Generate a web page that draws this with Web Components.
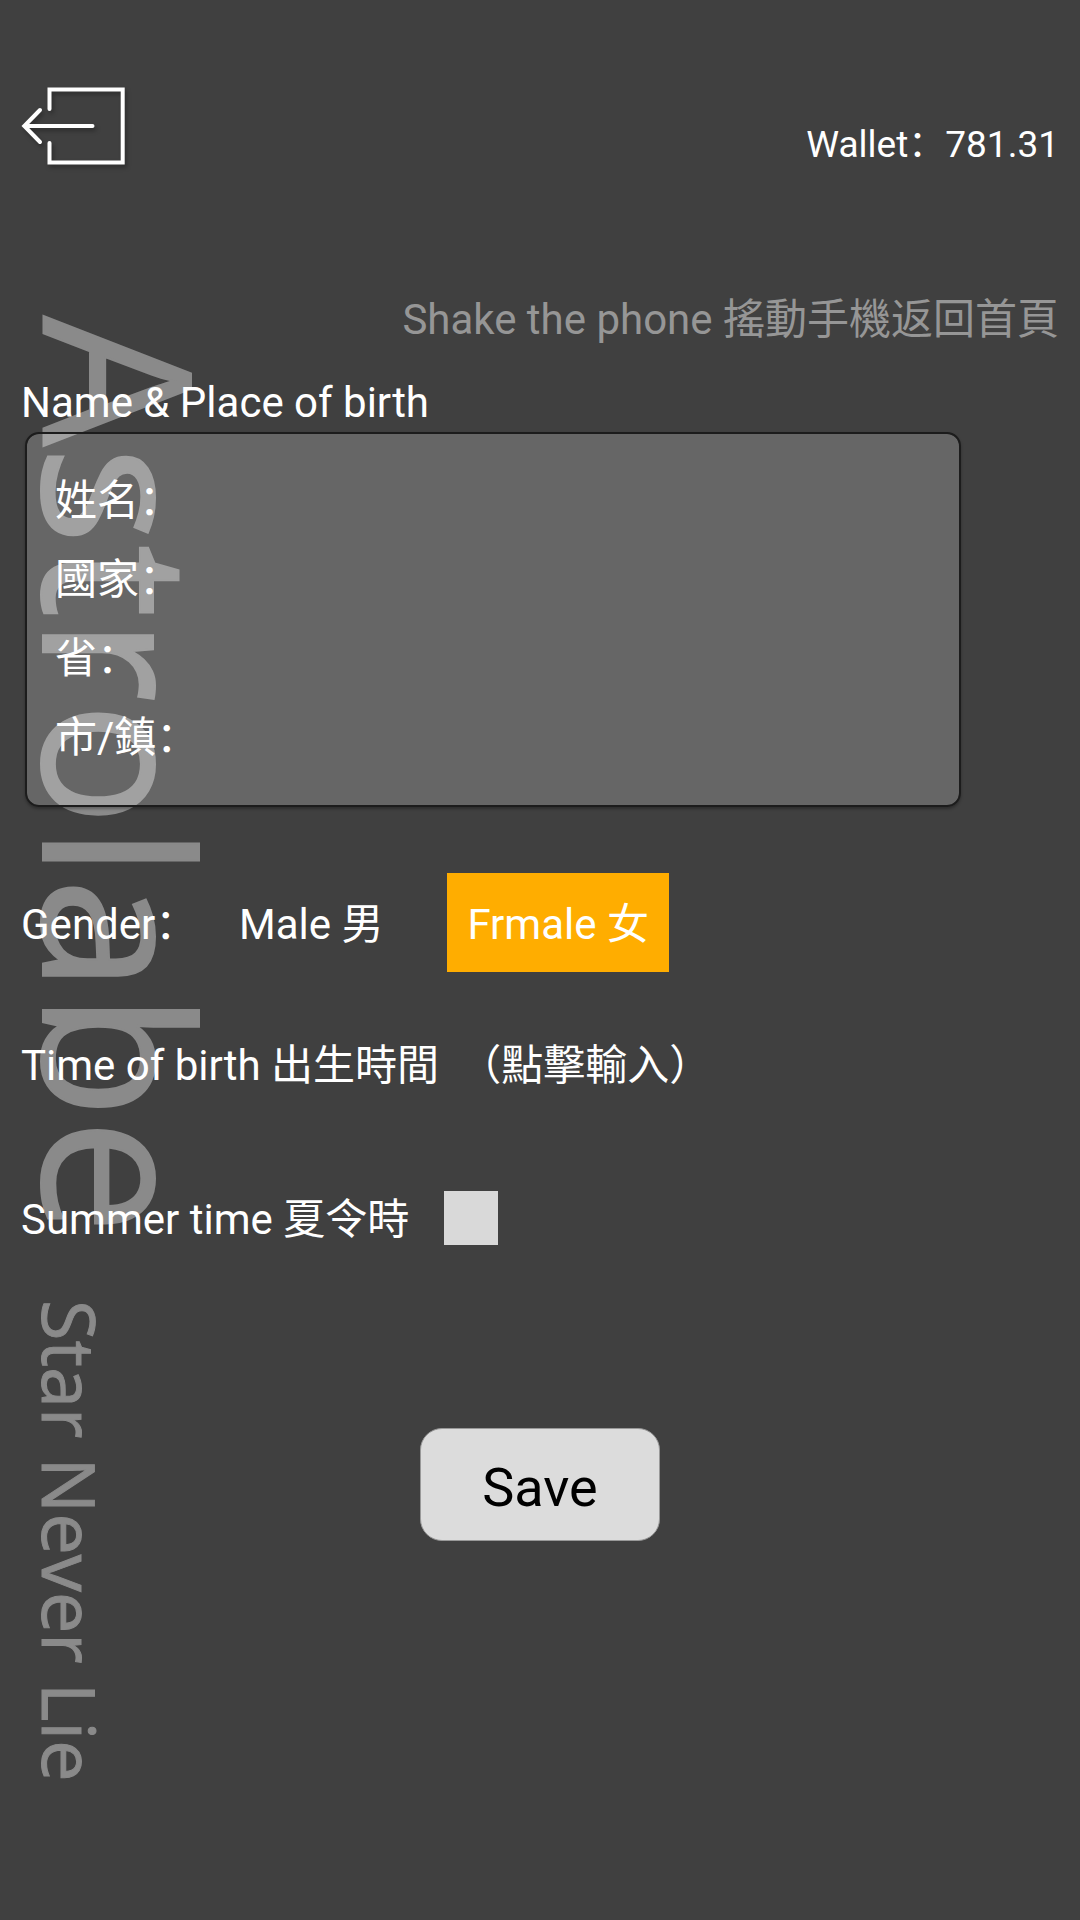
<!DOCTYPE html>
<html lang="en">
<head>
<meta charset="utf-8">
<meta name="viewport" content="width=device-width, initial-scale=1">
<title>Astrolabe</title>
<style>
  body {
    margin: 0;
    min-height: 100vh;
    background: #404040;
    color: #fff;
    font: 42px/50px Roboto, "Noto Sans CJK SC", sans-serif;
  }
</style>
</head>
<body>
<astro-page>
  <astro-watermark slot="backdrop">
    Astrolabe
    <span slot="tagline">Star Never Lie</span>
  </astro-watermark>
  <astro-header slot="header">Wallet：781.31</astro-header>
  <astro-hint>Shake the phone 搖動手機返回首頁</astro-hint>
  <birth-place heading="Name &amp; Place of birth">
    <text-field name="name">姓名：</text-field>
    <text-field name="country">國家：</text-field>
    <text-field name="province">省：</text-field>
    <text-field name="city">市/鎮：</text-field>
  </birth-place>
  <gender-picker label="Gender：" male="Male 男" female="Frmale 女"></gender-picker>
  <birth-time label="Time of birth 出生時間">（點擊輸入）</birth-time>
  <summer-time>Summer time 夏令時</summer-time>
  <save-button>Save</save-button>
</astro-page>

<script>
  const define = (name, render) => customElements.define(name, class extends HTMLElement {
    constructor() {
      super();
      this.attachShadow({ mode: 'open' });
    }
    connectedCallback() {
      this.shadowRoot.innerHTML = render(this);
    }
  });

  define('astro-page', () => `
    <style>
      :host { display: block; position: relative; min-height: 100vh; }
      main { position: relative; display: flex; flex-direction: column; padding: 84px 21px 0; }
    </style>
    <slot name="backdrop"></slot>
    <main><slot name="header"></slot><slot></slot></main>`);

  // Decorative vertical title lying behind the form
  define('astro-watermark', () => `
    <style>
      :host {
        position: absolute; top: 316px; left: 0;
        display: flex; flex-direction: column; align-items: flex-start; gap: 66px;
        color: #8a8a8a; font-family: "Open Sans", sans-serif; white-space: nowrap;
      }
      div { writing-mode: vertical-rl; }
      .title { font-size: 206px; line-height: 246px; -webkit-text-stroke: 2px #8a8a8a; }
      .tagline { font-size: 74px; line-height: 140px; -webkit-text-stroke: 1px #8a8a8a; }
    </style>
    <div class="title"><slot></slot></div>
    <div class="tagline"><slot name="tagline"></slot></div>`);

  define('astro-header', () => `
    <style>
      :host { display: flex; justify-content: space-between; align-items: flex-end; font-size: 37px; line-height: 46px; }
      button { border: 0; padding: 0; background: none; display: block; }
      svg { display: block; width: 108px; height: 84px; filter: drop-shadow(2px 3px 2px rgba(0,0,0,.3)); }
    </style>
    <button type="button" aria-label="Back">
      <svg viewBox="21 84 108 84" fill="none" stroke="#fff" stroke-width="4" stroke-linecap="round">
        <path d="M49.5 109V89.5H122.7V162.5H49.5V143M92.5 126H25M40 110L24.3 126L40 142"/>
      </svg>
    </button>
    <span><slot></slot></span>`);

  define('astro-hint', () => `
    <style>:host { display: block; margin-top: 127px; text-align: right; color: #969696; }</style>
    <slot></slot>`);

  define('birth-place', el => `
    <style>
      :host { display: block; margin-top: 33px; }
      h2 { margin: 0; font: inherit; }
      .panel {
        display: flex; flex-direction: column; gap: 29px;
        margin: 4px 98px 0 4px; padding: 42px 28px; border: 2px solid #1c1c1c; border-radius: 14px;
        background: rgba(255,255,255,.2) padding-box;
        box-shadow: 0 2px 3px rgba(0,0,0,.3);
      }
    </style>
    <h2>${el.getAttribute('heading').replace('&', '&amp;')}</h2>
    <div class="panel"><slot></slot></div>`);

  define('text-field', el => `
    <style>
      :host { display: block; }
      label { display: flex; }
      input { flex: 1; min-width: 0; height: 50px; padding: 0; border: 0; outline: 0; background: none; color: inherit; font: inherit; }
    </style>
    <label><slot></slot><input type="text" name="${el.getAttribute('name')}"></label>`);

  define('gender-picker', el => `
    <style>
      :host { display: flex; margin-top: 66px; }
      span, label { display: block; padding: 27px 0 22px; }
      span { width: 198px; }
      label { padding-left: 20px; padding-right: 20px; }
      label + label { margin-left: 44px; }
      label:has(:checked) { background: #ffad00; }
      input { position: absolute; opacity: 0; }
    </style>
    <span>${el.getAttribute('label')}</span>
    <label><input type="radio" name="gender" value="male">${el.getAttribute('male')}</label>
    <label><input type="radio" name="gender" value="female" checked>${el.getAttribute('female')}</label>`);

  define('birth-time', el => `
    <style>
      :host { display: flex; gap: 20px; margin-top: 69px; }
      button { border: 0; padding: 0; background: none; color: inherit; font: inherit; }
    </style>
    <span>${el.getAttribute('label')}</span>
    <button type="button"><slot></slot></button>`);

  define('summer-time', () => `
    <style>
      :host { display: block; margin-top: 100px; }
      label { display: flex; align-items: flex-end; gap: 35px; }
      input { appearance: none; width: 54px; height: 54px; margin: 0; background: #d9d9d9; }
      input:checked { background: #ffad00; }
    </style>
    <label><slot></slot><input type="checkbox"></label>`);

  define('save-button', () => `
    <style>
      :host { display: block; margin-top: 183px; text-align: center; }
      button {
        width: 240px; height: 113px; padding: 6px 0 0; border: 1px solid #999; border-radius: 22px;
        background: #dcdcdc; color: #000; font: inherit; font-size: 54px;
      }
    </style>
    <button type="button"><slot></slot></button>`);
</script>
</body>
</html>
